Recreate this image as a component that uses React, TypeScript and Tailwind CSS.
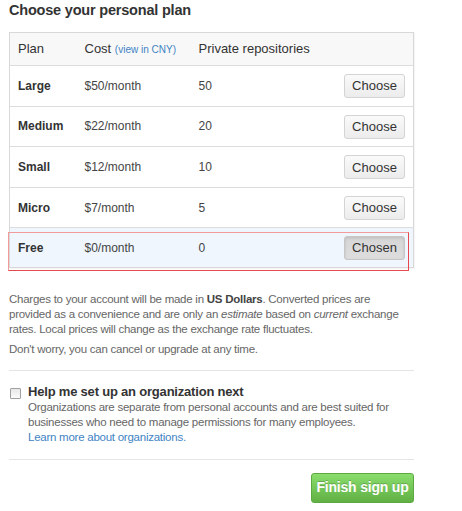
import { Fragment } from "react";

const PLANS = [
  { name: "Large", cost: "$50/month", repos: "50" },
  { name: "Medium", cost: "$22/month", repos: "20" },
  { name: "Small", cost: "$12/month", repos: "10" },
  { name: "Micro", cost: "$7/month", repos: "5" },
  { name: "Free", cost: "$0/month", repos: "0", chosen: true },
];

export default function App() {
  return (
    <div className="min-h-[511px] bg-white font-['Liberation_Sans',Arial,sans-serif] text-[#333]">
      <div className="ml-[9px] w-[405px]">
        <h2 className="text-[14.5px] leading-[20px] font-bold tracking-[-0.2px] text-[#333]">Choose your personal plan</h2>

        <div className="relative mt-[12px]">
          <table className="w-full border-collapse border border-[#d8d8d8] shadow-[1px_1px_1px_rgba(0,0,0,0.04)]">
            <thead>
              <tr className="h-[33px] bg-[#f8f8f8] border-b border-[#dcdcdc]">
                <th className="w-[75px] pl-[8px] text-left text-[13px] font-normal">Plan</th>
                <th className="w-[114px] text-left text-[13px] font-normal">
                  Cost <span className="text-[10px] text-[#4183c4]">(view in CNY)</span>
                </th>
                <th className="text-left text-[13px] font-normal">Private repositories</th>
                <th className="w-[80px]" />
              </tr>
            </thead>
            <tbody>
              {PLANS.map(p => (
                <Fragment key={p.name}>
                  <tr className={p.chosen ? "h-[39.5px] bg-[#eff6fd]" : "h-[40.6px] border-b border-[#dcdcdc]"}>
                    <td className="pl-[8px] text-[12px] font-bold">{p.name}</td>
                    <td className="text-[12px] text-[#444]">{p.cost}</td>
                    <td className="text-[12px] text-[#444]">{p.repos}</td>
                    <td className="pr-[8px] text-right">
                      {p.chosen ? (
                        <button className="h-[24px] w-[61px] rounded-[3px] border border-[#c6c6c6] bg-gradient-to-b from-[#d6d6d6] to-[#dedede] text-[13px] text-[#333] shadow-[inset_0_1px_3px_rgba(0,0,0,0.12)]">
                          Chosen
                        </button>
                      ) : (
                        <button className="h-[24px] w-[61px] rounded-[3px] border border-[#d4d4d4] bg-gradient-to-b from-[#fafafa] to-[#ececec] text-[13px] text-[#333]">
                          Choose
                        </button>
                      )}
                    </td>
                  </tr>
                </Fragment>
              ))}
            </tbody>
          </table>
          <div className="absolute left-[-1px] top-[200px] h-[39px] w-[401px] border border-[#e5484d] border-t-[#f29a9c] border-l-[#f29a9c]" />
        </div>

        <div className="text-[11.5px] leading-[15px] tracking-[-0.25px] text-[#666]">
          <p className="mt-[24px]">
            Charges to your account will be made in <strong className="text-[#444]">US Dollars</strong>. Converted prices
            are provided as a convenience and are only an <em>estimate</em> based on <em>current</em> exchange rates. Local
            prices will change as the exchange rate fluctuates.
          </p>
          <p className="mt-[5px]">Don't worry, you can cancel or upgrade at any time.</p>
        </div>

        <div className="mt-[13px] border-t border-[#e5e5e5] pt-[12px] pb-[14px]">
          <div className="flex">
            <div className="mt-[5px] ml-[1px] h-[11px] w-[11px] shrink-0 rounded-[1px] border border-[#a0a0a0] bg-gradient-to-b from-[#e8e8e8] to-[#fbfbfb]" />
            <div className="ml-[7px]">
              <div className="text-[13px] leading-[17px] font-bold tracking-[-0.2px] text-[#333]">Help me set up an organization next</div>
              <div className="text-[11.5px] leading-[15px] tracking-[-0.25px] text-[#666]">
                Organizations are separate from personal accounts and are best suited for businesses who need to manage
                permissions for many employees.
              </div>
              <div className="text-[11.5px] leading-[15px] tracking-[-0.25px] text-[#4183c4]">Learn more about organizations.</div>
            </div>
          </div>
        </div>

        <div className="flex justify-end border-t border-[#e5e5e5] pt-[13px]">
          <button className="h-[30px] w-[103px] rounded-[3px] border border-[#5ca941] bg-gradient-to-b from-[#8add6d] to-[#60b044] text-[14px] font-bold tracking-[-0.2px] text-white [text-shadow:0_-1px_0_rgba(0,0,0,0.2)]">
            Finish sign up
          </button>
        </div>
      </div>
    </div>
  );
}
